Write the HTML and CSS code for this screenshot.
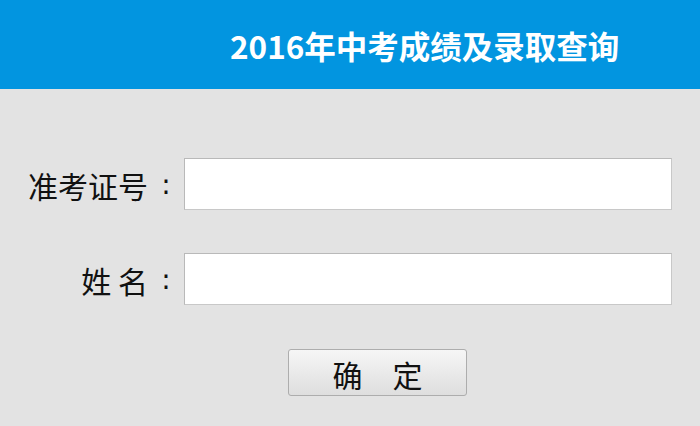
FILE: index.html
```html
<!DOCTYPE html>
<html lang="zh-CN">
<head>
<meta charset="utf-8">
<title>2016年中考成绩及录取查询</title>
<link rel="stylesheet" href="styles.css">
</head>
<body>
<header class="topbar">
  <h1 class="title">2016年中考成绩及录取查询</h1>
</header>
<main class="form">
  <div class="row">
    <label class="label" for="zkzh"><span class="label-text">准考证号</span><span class="colon">:</span></label>
    <input class="field" id="zkzh" type="text">
  </div>
  <div class="row">
    <label class="label" for="xm"><span class="label-text">姓 名</span><span class="colon">:</span></label>
    <input class="field" id="xm" type="text">
  </div>
  <div class="actions">
    <button class="btn" type="button">确　定</button>
  </div>
</main>
</body>
</html>
```
FILE: styles.css
```css
html, body {
  margin: 0;
  padding: 0;
}
body {
  width: 700px;
  height: 426px;
  overflow: hidden;
  background: #e3e3e3;
  font-family: "Noto Sans CJK SC", "Liberation Sans", sans-serif;
  color: #111;
}
.topbar {
  height: 89px;
  background: #0295e0;
  display: flex;
  align-items: center;
  padding-left: 230px;
  box-sizing: border-box;
}
.title {
  margin: 0;
  color: #fff;
  font-size: 31.5px;
  font-weight: 700;
  line-height: 1;
  padding-top: 2px;
}
.form {
  display: flex;
  flex-direction: column;
  padding-top: 69px;
}
.row {
  display: grid;
  grid-template-columns: 184px 488px;
  align-items: center;
  height: 52px;
  margin-bottom: 43px;
}
.label {
  display: flex;
  justify-content: flex-end;
  align-items: center;
  font-size: 30px;
  line-height: 1;
  padding-top: 2px;
}
.label-text {
  white-space: pre;
}
.colon {
  width: 36px;
  text-align: center;
  font-family: "DejaVu Sans", sans-serif;
  font-size: 28px;
}
.field {
  box-sizing: border-box;
  width: 488px;
  height: 52px;
  margin: 0;
  background: #fff;
  border: 1px solid #b9b9b9;
  border-right-color: #c8c8c8;
  border-bottom-color: #c8c8c8;
  outline: none;
  font-size: 20px;
}
.actions {
  padding-left: 288px;
  margin-top: 1px;
}
.btn {
  width: 179px;
  height: 47px;
  box-sizing: border-box;
  border: 1px solid #adadad;
  border-radius: 3px;
  background: linear-gradient(#f6f6f6, #dedede);
  font-family: "Noto Sans CJK SC", "Liberation Sans", sans-serif;
  font-size: 30px;
  line-height: 1;
  color: #111;
  padding: 2px 0 0 0;
}
```
